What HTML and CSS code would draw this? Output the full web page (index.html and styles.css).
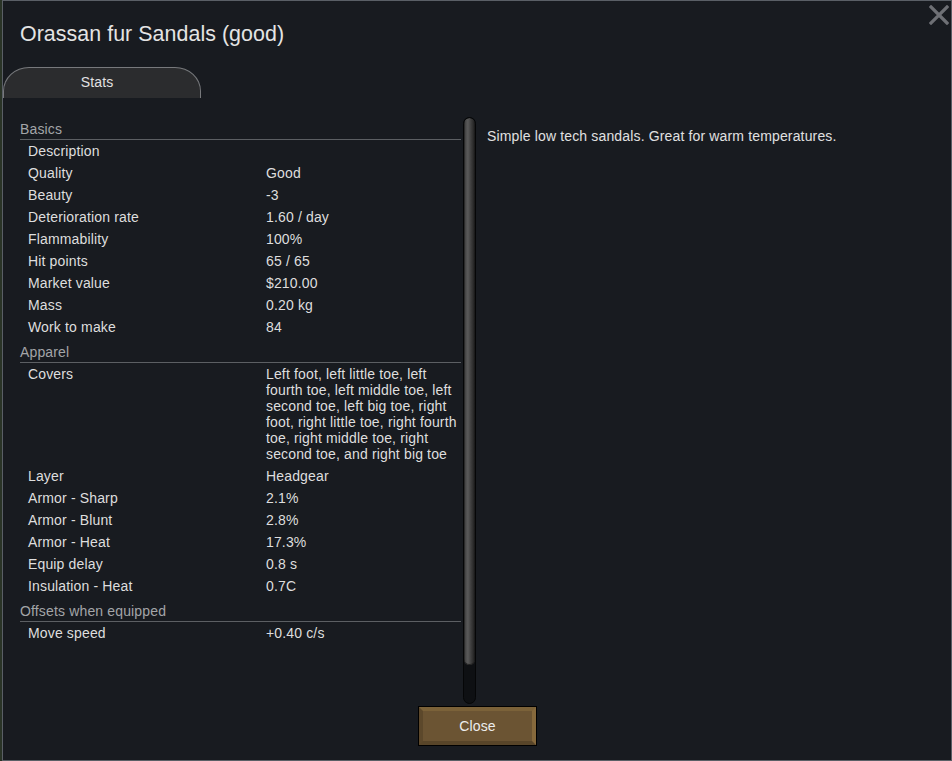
FILE: index.html
```html
<!DOCTYPE html>
<html>
<head>
<meta charset="utf-8">
<link rel="stylesheet" href="styles.css">
</head>
<body>
<div class="window">
  <div class="close-x">
    <svg width="20" height="20" viewBox="0 0 20 20"><path d="M2 2 L18 18 M18 2 L2 18" stroke="#6e7075" stroke-width="3.2" stroke-linecap="square"/></svg>
  </div>
  <div class="title">Orassan fur Sandals (good)</div>
  <div class="tabs"><div class="tab">Stats</div></div>
  <div class="content">
    <div class="stats">
      <div class="section">
        <div class="sec-head">Basics</div>
        <div class="row"><div class="label">Description</div><div class="value"></div></div>
        <div class="row"><div class="label">Quality</div><div class="value">Good</div></div>
        <div class="row"><div class="label">Beauty</div><div class="value">-3</div></div>
        <div class="row"><div class="label">Deterioration rate</div><div class="value">1.60 / day</div></div>
        <div class="row"><div class="label">Flammability</div><div class="value">100%</div></div>
        <div class="row"><div class="label">Hit points</div><div class="value">65 / 65</div></div>
        <div class="row"><div class="label">Market value</div><div class="value">$210.00</div></div>
        <div class="row"><div class="label">Mass</div><div class="value">0.20 kg</div></div>
        <div class="row"><div class="label">Work to make</div><div class="value">84</div></div>
      </div>
      <div class="section">
        <div class="sec-head">Apparel</div>
        <div class="row"><div class="label">Covers</div><div class="value">Left foot, left little toe, left fourth toe, left middle toe, left second toe, left big toe, right foot, right little toe, right fourth toe, right middle toe, right second toe, and right big toe</div></div>
        <div class="row"><div class="label">Layer</div><div class="value">Headgear</div></div>
        <div class="row"><div class="label">Armor - Sharp</div><div class="value">2.1%</div></div>
        <div class="row"><div class="label">Armor - Blunt</div><div class="value">2.8%</div></div>
        <div class="row"><div class="label">Armor - Heat</div><div class="value">17.3%</div></div>
        <div class="row"><div class="label">Equip delay</div><div class="value">0.8 s</div></div>
        <div class="row"><div class="label">Insulation - Heat</div><div class="value">0.7C</div></div>
      </div>
      <div class="section">
        <div class="sec-head">Offsets when equipped</div>
        <div class="row"><div class="label">Move speed</div><div class="value">+0.40 c/s</div></div>
      </div>
    </div>
    <div class="scrollbar"><div class="thumb"></div></div>
    <div class="desc">Simple low tech sandals. Great for warm temperatures.</div>
  </div>
  <div class="footer"><button class="close-btn">Close</button></div>
</div>
</body>
</html>
```

FILE: styles.css
```css
html, body {
  margin: 0;
  padding: 0;
}
body {
  background: #2a3427;
  font-family: "Liberation Sans", Arial, sans-serif;
  font-size: 14px;
  letter-spacing: 0.15px;
  color: #dedede;
  width: 952px;
  height: 761px;
  overflow: hidden;
}
.window {
  position: relative;
  margin-left: 2px;
  width: 950px;
  height: 761px;
  box-sizing: border-box;
  border: 1px solid #5a5f66;
  background: #181b20;
  display: flex;
  flex-direction: column;
}
.close-x {
  position: absolute;
  top: 4px;
  right: 2px;
  width: 20px;
  height: 20px;
}
.close-x svg { display: block; }
.title {
  padding-top: 21px;
  padding-left: 17px;
  font-size: 21.4px;
  line-height: 24px;
  letter-spacing: 0.05px;
  color: #e4e4e4;
}
.tabs {
  margin-top: 21px;
  display: flex;
}
.tab {
  width: 198px;
  height: 31px;
  box-sizing: border-box;
  padding-right: 10px;
  background: #2b2c2e;
  border: 1px solid #77797c;
  border-bottom: none;
  border-radius: 26px 26px 0 0 / 24px 24px 0 0;
  text-align: center;
  line-height: 28px;
  color: #e2e2e2;
}
.content {
  margin-top: 19px;
  height: 587px;
  display: flex;
}
.stats {
  margin-left: 17px;
  width: 441px;
  padding-top: 2px;
}
.section + .section { margin-top: 4px; }
.sec-head {
  padding: 2px 0;
  line-height: 16px;
  color: #a3a5a8;
  border-bottom: 1px solid #5c5f63;
}
.row {
  display: flex;
  padding: 3px 0;
  line-height: 16px;
}
.label {
  width: 238px;
  padding-left: 8px;
  flex-shrink: 0;
}
.value {
  width: 195px;
}
.scrollbar {
  margin-left: 2px;
  width: 13px;
  height: 587px;
  box-sizing: border-box;
  border: 1px solid #050607;
  border-radius: 7px;
  background: #0e1013;
  overflow: hidden;
}
.thumb {
  height: 547px;
  border-radius: 6px;
  background: linear-gradient(to right, #1c1c1c 0%, #4a4a4a 15%, #5a5a5a 35%, #3c3c3c 65%, #2a2a2a 85%, #151515 100%);
  box-shadow: inset 0 -1px 0 #222;
}
.desc {
  margin-left: 11px;
  padding-top: 11px;
  line-height: 16px;
  color: #e0e0e0;
}
.footer {
  margin-top: 3px;
  display: flex;
  justify-content: center;
  padding-left: 1px;
}
.close-btn {
  width: 117px;
  height: 38px;
  box-sizing: border-box;
  background: #6b5433;
  border-style: solid;
  border-width: 4px;
  border-color: #7b6239 #86693c #584529 #5c482b;
  box-shadow: 0 0 0 1px #000;
  font-family: "Liberation Sans", Arial, sans-serif;
  font-size: 14px;
  letter-spacing: 0.15px;
  color: #ededed;
  padding: 0;
  margin: 0;
}
```
